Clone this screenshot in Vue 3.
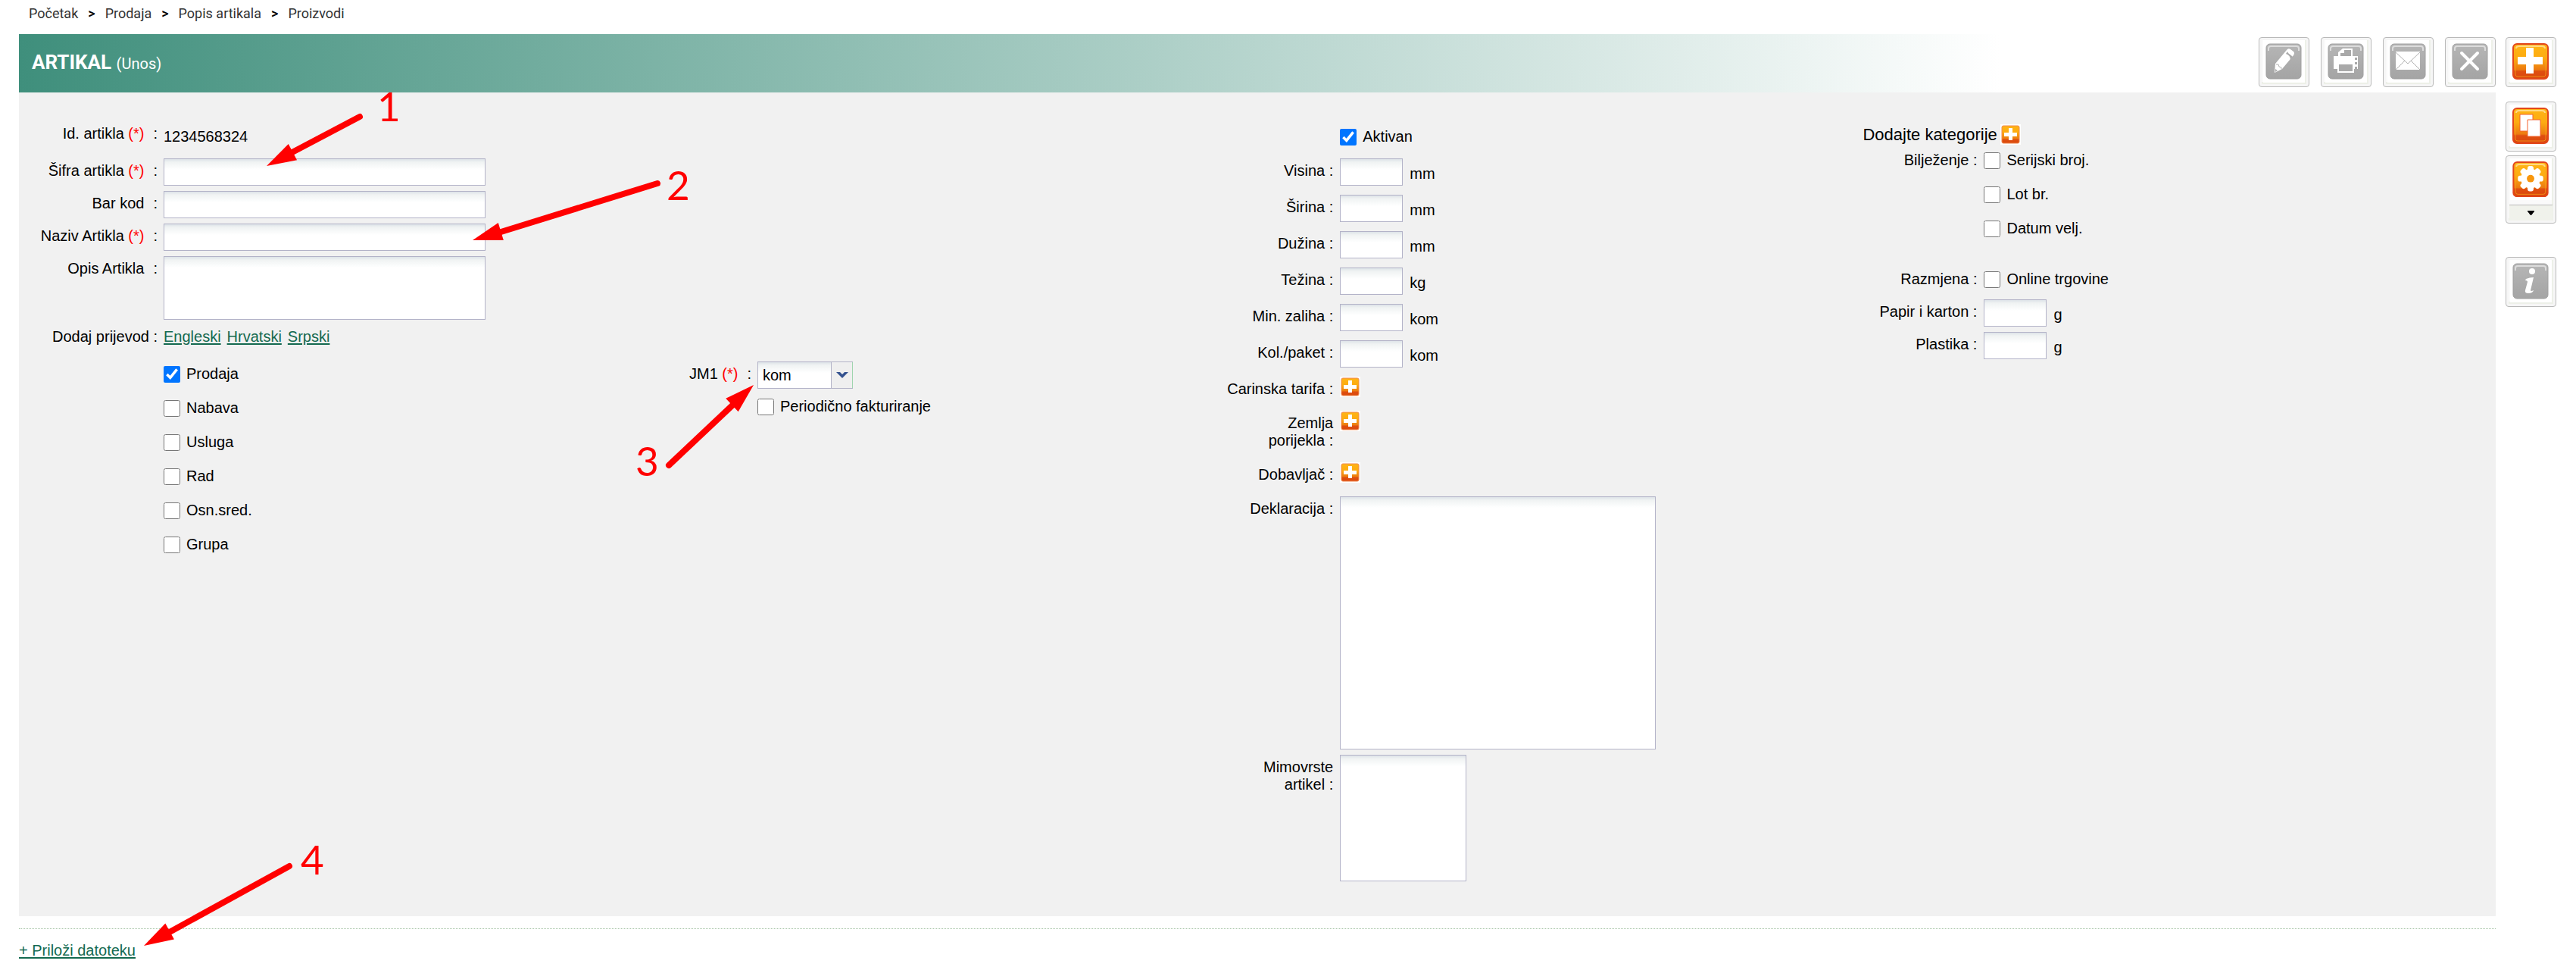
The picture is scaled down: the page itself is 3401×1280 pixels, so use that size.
<template>
  <div class="page">

    <!-- BREADCRUMBS -->
    <nav class="crumbs">
      <template v-for="(crumb, i) in crumbs" :key="crumb">
        <span v-if="i" class="sep">&gt;</span>
        <a href="#">{{ crumb }}</a>
      </template>
    </nav>

    <div class="body">
      <main class="main">

        <!-- HEADER -->
        <header class="title-bar">
          <h1>ARTIKAL <small>(Unos)</small></h1>
          <div class="tools">
            <button v-for="tool in tools" :key="tool.name" class="tool" :aria-label="tool.name">
              <svg class="icon" viewBox="0 0 48 48">
                <use href="#tile-gray" />
                <use :href="'#' + tool.icon" />
              </svg>
            </button>
          </div>
        </header>

        <!-- FORM -->
        <form class="panel" @submit.prevent>
          <div class="left">
            <div class="row id-row">
              <span class="lbl">Id. artikla <em>(*)</em><i>:</i></span>
              <span class="value">1234568324</span>
            </div>
            <div v-for="field in textFields" :key="field.id" class="row">
              <label class="lbl" :for="field.id">{{ field.label }}<em v-if="field.required">&nbsp;(*)</em><i>:</i></label>
              <input :id="field.id" v-model="field.value" type="text" class="box wide" />
            </div>
            <div class="row">
              <label class="lbl" for="opis">Opis Artikla<i>:</i></label>
              <textarea id="opis" v-model="description" class="box wide note"></textarea>
            </div>
            <div class="row links-row">
              <span class="lbl">Dodaj prijevod :</span>
              <div class="links">
                <a v-for="lang in languages" :key="lang" href="#">{{ lang }}</a>
              </div>
            </div>

            <div class="split">
              <div class="checks kinds">
                <label v-for="kind in kinds" :key="kind.label" class="check">
                  <input v-model="kind.on" type="checkbox" />
                  <span>{{ kind.label }}</span>
                </label>
              </div>
              <div class="unit-block">
                <div class="row">
                  <label class="lbl" for="jm">JM1 <em>(*)</em><i>:</i></label>
                  <div class="select-wrap">
                    <select id="jm" v-model="unit" class="box">
                      <option>kom</option>
                      <option>kg</option>
                    </select>
                    <span class="select-arrow">
                      <svg viewBox="0 0 16 10"><path d="M0 1h5l3 3 3-3h5L8 9z" fill="#34528f" /></svg>
                    </span>
                  </div>
                </div>
                <label class="check periodic">
                  <input v-model="periodic" type="checkbox" />
                  <span>Periodično fakturiranje</span>
                </label>
              </div>
            </div>
          </div>

          <div class="middle">
            <label class="check active">
              <input v-model="active" type="checkbox" />
              <span>Aktivan</span>
            </label>
            <div v-for="size in sizes" :key="size.id" class="row size-row">
              <label class="lbl" :for="size.id">{{ size.label }} :</label>
              <input :id="size.id" v-model="size.value" type="text" class="box short" />
              <span class="unit">{{ size.unit }}</span>
            </div>
            <div v-for="item in lookups" :key="item" class="row lookup">
              <span class="lbl">{{ item }}&nbsp;:</span>
              <button class="add" type="button" :aria-label="item">
                <svg viewBox="0 0 27 27"><use href="#add-small" /></svg>
              </button>
            </div>
            <div class="row">
              <label class="lbl" for="deklaracija">Deklaracija :</label>
              <textarea id="deklaracija" v-model="declaration" class="box declaration"></textarea>
            </div>
            <div class="row">
              <label class="lbl" for="mimovrste">Mimovrste artikel :</label>
              <textarea id="mimovrste" v-model="mimovrste" class="box mimovrste"></textarea>
            </div>
          </div>

          <div class="right">
            <div class="categories">
              <span>Dodajte kategorije</span>
              <button class="add" type="button" aria-label="Dodajte kategorije">
                <svg viewBox="0 0 27 27"><use href="#add-small" /></svg>
              </button>
            </div>
            <div class="row check-row">
              <span class="lbl">Bilježenje :</span>
              <div class="checks">
                <label v-for="mark in marks" :key="mark.label" class="check">
                  <input v-model="mark.on" type="checkbox" />
                  <span>{{ mark.label }}</span>
                </label>
              </div>
            </div>
            <div class="row check-row exchange">
              <span class="lbl">Razmjena :</span>
              <label class="check">
                <input v-model="online" type="checkbox" />
                <span>Online trgovine</span>
              </label>
            </div>
            <div v-for="pack in packaging" :key="pack.id" class="row">
              <label class="lbl" :for="pack.id">{{ pack.label }} :</label>
              <input :id="pack.id" v-model="pack.value" type="text" class="box short" />
              <span class="unit">g</span>
            </div>
          </div>
        </form>

        <!-- ATTACHMENT -->
        <footer class="attach">
          <a href="#">+ Priloži datoteku</a>
        </footer>
      </main>

      <!-- SIDE ACTIONS -->
      <aside class="side">
        <button class="tool" aria-label="Novi">
          <svg class="icon" viewBox="0 0 48 48">
            <use href="#tile-orange" />
            <path d="M18 6h10v12h12v10H28v12H18V28H7V18h11z" fill="#fff" />
          </svg>
        </button>
        <button class="tool copy" aria-label="Kopiraj">
          <svg class="icon" viewBox="0 0 48 48">
            <use href="#tile-orange" />
            <path d="M10 9h17v22H10z" fill="#fff" stroke="#f4622c" />
            <path d="M20 16h17v22H20z" fill="#fff" stroke="#f4622c" />
          </svg>
        </button>
        <button class="tool menu" aria-label="Postavke">
          <svg class="icon" viewBox="0 0 48 48">
            <use href="#tile-orange" />
            <g fill="#fff">
              <circle cx="24" cy="23" r="13" />
              <rect v-for="a in [0, 45, 90, 135]" :key="a" x="20" y="6" width="8" height="34" rx="3" :transform="`rotate(${a} 24 23)`" />
            </g>
            <circle cx="24" cy="23" r="5" fill="#f8960d" />
          </svg>
          <span class="drop">
            <svg viewBox="0 0 9 6"><path d="M0 0h9v1L5 6H4L0 1z" /></svg>
          </span>
        </button>
        <button class="tool info" aria-label="Info">
          <svg class="icon" viewBox="0 0 48 48">
            <use href="#tile-gray" />
            <circle cx="26" cy="11" r="4" fill="#fff" />
            <path d="M18 21q5-2 10-2l-4 17q0 2 4 0-1 4-7 4-5 0-4-4l3-11q0-2-3-2z" fill="#fff" />
          </svg>
        </button>
      </aside>
    </div>

    <!-- NUMBERED POINTERS -->
    <svg class="pointers" aria-hidden="true">
      <g v-for="p in pointers" :key="p.n">
        <line :x1="p.x1" :y1="p.y1" :x2="p.x2" :y2="p.y2" />
        <polygon points="0,0 39,-12 39,12" :transform="`translate(${p.tipX} ${p.tipY}) rotate(${p.angle})`" />
        <text :x="p.tx" :y="p.ty">{{ p.n }}</text>
      </g>
    </svg>

    <!-- SHARED SYMBOLS -->
    <svg class="defs" aria-hidden="true">
      <defs>
        <linearGradient id="orange" x1="0" y1="0" x2="0" y2="1">
          <stop offset="0" stop-color="#ffb516" />
          <stop offset="0.4" stop-color="#fdab10" />
          <stop offset="0.74" stop-color="#ec7a10" />
          <stop offset="0.78" stop-color="#df4f10" />
          <stop offset="1" stop-color="#da480c" />
        </linearGradient>
        <linearGradient id="gray" x1="0" y1="0" x2="0" y2="1">
          <stop offset="0" stop-color="#b6b6b6" />
          <stop offset="1" stop-color="#a4a4a4" />
        </linearGradient>
        <g id="tile-orange">
          <rect x="1" y="1" width="46" height="46" rx="5" fill="url(#orange)" stroke="#e2471a" stroke-width="2" />
          <rect x="4" y="4" width="40" height="40" rx="3" fill="none" stroke="#f9a51c" opacity="0.7" />
          <path d="M5 7q0-3 4-3h30q4 0 4 3" fill="none" stroke="#ffd983" stroke-width="2" />
        </g>
        <g id="tile-gray">
          <rect x="1" y="1" width="46" height="46" rx="5" fill="url(#gray)" stroke="#a0a0a0" />
          <path d="M4 10V7q0-3 3-3h34q3 0 3 3v3" fill="none" stroke="#dcdcdc" stroke-width="2" />
        </g>
        <g id="add-small">
          <rect width="27" height="27" fill="#fff" />
          <rect x="2" y="2" width="23" height="23" rx="2" fill="url(#orange)" stroke="#f08a50" />
          <path d="M11 5h5v6h6v5h-6v5h-5v-5H5v-5h6z" fill="#fff" />
        </g>
        <g id="pencil">
          <path d="M12 39l1-12L28 9q2-3 5-1l4 3q2 2 0 5L22 34z" fill="#fff" />
          <path d="M27 14l2-3 1 2 5 4 1 1-3 4q0-6-6-8zM13 34l3 2-3 2z" fill="#ababab" />
          <path d="M14 28h3l1 3 3 1v2" fill="none" stroke="#b4b4b4" />
        </g>
        <g id="printer">
          <path d="M14 17v-5l6-5h13v10h7v17h-5v5H13v-5H8V17z" fill="#fff" />
          <path d="M17 17v-4h5V9h9v8zM15 28h18v9H15z" fill="#a9a9a9" />
          <path d="M36 19h3v3h-3zM36 25h3v3h-3zM36 31h3v3h-3z" fill="#a9a9a9" />
        </g>
        <g id="mail">
          <path d="M8 11h32v24H8z" fill="#fff" />
          <path d="M8 12l16 15 16-15M8 35l12-12M40 35L28 23" fill="none" stroke="#b0b0b0" />
        </g>
        <g id="close">
          <path d="M13 13l21 21M34 13L13 34" fill="none" stroke="#fff" stroke-width="4" stroke-linecap="round" />
        </g>
      </defs>
    </svg>
  </div>
</template>

<script setup>
import { ref } from 'vue'

const crumbs = ['Početak', 'Prodaja', 'Popis artikala', 'Proizvodi']
const languages = ['Engleski', 'Hrvatski', 'Srpski']
const lookups = ['Carinska tarifa', 'Zemlja porijekla', 'Dobavljač']

const tools = [
  { name: 'Uredi', icon: 'pencil' },
  { name: 'Ispis', icon: 'printer' },
  { name: 'Pošalji', icon: 'mail' },
  { name: 'Obriši', icon: 'close' }
]

const textFields = ref([
  { id: 'sifra', label: 'Šifra artikla', required: true, value: '' },
  { id: 'barkod', label: 'Bar kod', required: false, value: '' },
  { id: 'naziv', label: 'Naziv Artikla', required: true, value: '' }
])

const kinds = ref([
  { label: 'Prodaja', on: true },
  { label: 'Nabava', on: false },
  { label: 'Usluga', on: false },
  { label: 'Rad', on: false },
  { label: 'Osn.sred.', on: false },
  { label: 'Grupa', on: false }
])

const sizes = ref([
  { id: 'visina', label: 'Visina', unit: 'mm', value: '' },
  { id: 'sirina', label: 'Širina', unit: 'mm', value: '' },
  { id: 'duzina', label: 'Dužina', unit: 'mm', value: '' },
  { id: 'tezina', label: 'Težina', unit: 'kg', value: '' },
  { id: 'zaliha', label: 'Min. zaliha', unit: 'kom', value: '' },
  { id: 'paket', label: 'Kol./paket', unit: 'kom', value: '' }
])

const marks = ref([
  { label: 'Serijski broj.', on: false },
  { label: 'Lot br.', on: false },
  { label: 'Datum velj.', on: false }
])

const packaging = ref([
  { id: 'papir', label: 'Papir i karton', value: '' },
  { id: 'plastika', label: 'Plastika', value: '' }
])

const description = ref('')
const declaration = ref('')
const mimovrste = ref('')
const unit = ref('kom')
const periodic = ref(false)
const active = ref(true)
const online = ref(false)

// shaft from (x1, y1) to (x2, y2), head rotated around its tip
const pointers = [
  { n: 1, x1: 475, y1: 154, x2: 382, y2: 203, tipX: 352, tipY: 219, angle: -28, tx: 498, ty: 160 },
  { n: 2, x1: 868, y1: 242, x2: 655, y2: 308, tipX: 624, tipY: 317, angle: -17, tx: 880, ty: 264 },
  { n: 3, x1: 883, y1: 614, x2: 970, y2: 532, tipX: 995, tipY: 508, angle: 137, tx: 839, ty: 628 },
  { n: 4, x1: 382, y1: 1143, x2: 222, y2: 1231, tipX: 190, tipY: 1248, angle: -29, tx: 397, ty: 1154 }
]
</script>

<style>
body {
  background: #fff;
}
</style>

<style scoped>
.page {
  position: relative;
  font-family: "Liberation Sans", Arial, sans-serif;
  font-size: 20px;
  line-height: 23px;
  color: #000;
  padding: 0 26px 4px 25px;
}

/* BREADCRUMBS */
.crumbs {
  display: flex;
  gap: 13px;
  height: 45px;
  padding: 6px 13px;
  box-sizing: border-box;
  font-family: Roboto, sans-serif;
  font-size: 18px;
}

.crumbs a {
  color: #333;
  text-decoration: none;
}

.crumbs .sep {
  font-size: 18px;
  font-weight: 500;
}

.body {
  display: flex;
  gap: 13px;
}

.main {
  flex: 1;
}

/* HEADER */
.title-bar {
  display: flex;
  align-items: center;
  justify-content: space-between;
  height: 77px;
  padding-left: 17px;
  background: linear-gradient(to right, #3f8f7c 0, #fff 80%);
}

.title-bar h1 {
  margin: 0;
  color: #fff;
  font-family: Roboto, sans-serif;
  font-size: 26px;
  font-weight: 700;
}

.title-bar small {
  font-size: 20px;
  font-weight: 400;
}

.tools {
  display: flex;
  align-self: flex-start;
  gap: 15px;
  padding-top: 4px;
}

.tool {
  display: flex;
  flex-direction: column;
  align-items: center;
  width: 67px;
  height: 66px;
  padding: 3px;
  border: 1px solid #b9b9b9;
  border-radius: 4px;
  background: #fafafa;
  box-shadow: inset 0 0 0 3px #f6f6f6, inset -5px -6px 0 #edf0e8;
}

.icon {
  display: block;
  width: 48px;
  height: 48px;
  padding: 4px 4px 4px 3px;
  background: #fff;
}

/* FORM */
.panel {
  display: grid;
  grid-template-columns: 47.5% 26% 1fr;
  padding: 42px 0 39px;
  background: #f1f1f1;
}

.row {
  display: flex;
  align-items: flex-start;
  gap: 9px;
  margin-bottom: 7px;
}

.lbl {
  box-sizing: border-box;
  flex: none;
  width: 182px;
  padding: 5px 0 0 60px;
  text-align: right;
}

.left .row {
  gap: 8px;
}

.left .lbl {
  width: 183px;
  padding-left: 0;
}

.lbl em {
  color: #f00;
  font-style: normal;
}

.lbl i {
  margin-left: 12px;
  font-style: normal;
}

.id-row {
  height: 38px;
}

.id-row .lbl {
  padding-top: 1px;
}

.value {
  padding-top: 5px;
}

.box {
  box-sizing: border-box;
  display: block;
  margin: 0;
  padding: 4px 6px;
  border: 1px solid #b3b3c8;
  border-radius: 0;
  background: linear-gradient(#dde3e8 0, #f0f3f3 4px, #fdfefe 13px, #fff 14px);
  font: inherit;
  resize: none;
}

.wide {
  width: 425px;
}

input.box,
select.box {
  height: 36px;
}

.short {
  width: 83px;
}

.note {
  height: 84px;
}

.links-row .lbl,
.links {
  padding-top: 4px;
}

.links {
  display: flex;
  gap: 8px;
}

.links a,
.attach a {
  color: #13694f;
  text-decoration: underline 2px;
  text-underline-offset: 2px;
}

.split {
  display: grid;
  grid-template-columns: 784px 1fr;
  padding-top: 14px;
}

.kinds {
  padding: 5px 0 0 191px;
}

.checks {
  display: flex;
  flex-direction: column;
  gap: 22px;
}

.check {
  display: flex;
  align-items: center;
  gap: 8px;
  height: 23px;
}

.check input {
  width: 22px;
  height: 22px;
  margin: 0;
}

.select-wrap {
  position: relative;
  width: 126px;
}

.select-wrap select {
  width: 100%;
  color: #000;
  appearance: none;
}

.select-arrow {
  position: absolute;
  inset: 1px 0 1px auto;
  display: flex;
  align-items: center;
  justify-content: center;
  width: 27px;
  border-right: 1px solid #9fd5ae;
  border-left: 1px solid #b3b3c8;
  background: #efefef;
  pointer-events: none;
}

.select-arrow svg {
  width: 16px;
  height: 10px;
}

.periodic {
  margin: 12px 0 0 191px;
}

.active {
  margin: 5px 0 17px 191px;
}

.size-row {
  margin-bottom: 12px;
}

.unit {
  padding-top: 9px;
}

.lookup {
  margin-bottom: 17px;
}

.lookup .lbl {
  padding-left: 36px;
}

.add {
  width: 27px;
  height: 27px;
  padding: 0;
  border: 0;
  background: none;
}

.add svg {
  display: block;
  width: 27px;
  height: 27px;
}

.declaration {
  width: 417px;
  height: 334px;
}

.mimovrste {
  width: 167px;
  height: 167px;
}

.categories {
  display: flex;
  align-items: center;
  gap: 4px;
  padding-left: 31px;
  font-size: 22px;
}

.right .lbl {
  padding-left: 0;
}

.check-row {
  margin: 9px 0 0;
}

.right .check-row .lbl {
  padding-top: 0;
}

.exchange {
  margin: 44px 0 15px;
}

/* ATTACHMENT */
.attach {
  margin-top: 16px;
  padding-top: 17px;
  border-top: 1px dotted #a5c3a5;
}

/* SIDE ACTIONS */
.side {
  padding-top: 4px;
}

.side .copy {
  margin-top: 19px;
}

.side .menu {
  height: 90px;
  margin-top: 5px;
}

.side .info {
  margin-top: 44px;
}

.drop {
  display: flex;
  align-items: center;
  justify-content: center;
  width: 57px;
  height: 20px;
  margin-top: 6px;
  border-top: 1px solid #b9b9b9;
  background: #f0f2eb;
}

.drop svg {
  width: 9px;
  height: 6px;
}

/* POINTERS */
.pointers {
  position: absolute;
  top: 0;
  left: 0;
  width: 100%;
  height: 100%;
  pointer-events: none;
}

.pointers line {
  stroke: #f00;
  stroke-width: 8px;
  stroke-linecap: round;
}

.pointers polygon,
.pointers text {
  fill: #f00;
}

.pointers text {
  font-family: Lato, sans-serif;
  font-size: 53px;
}

.defs {
  position: absolute;
  width: 0;
  height: 0;
}
</style>
